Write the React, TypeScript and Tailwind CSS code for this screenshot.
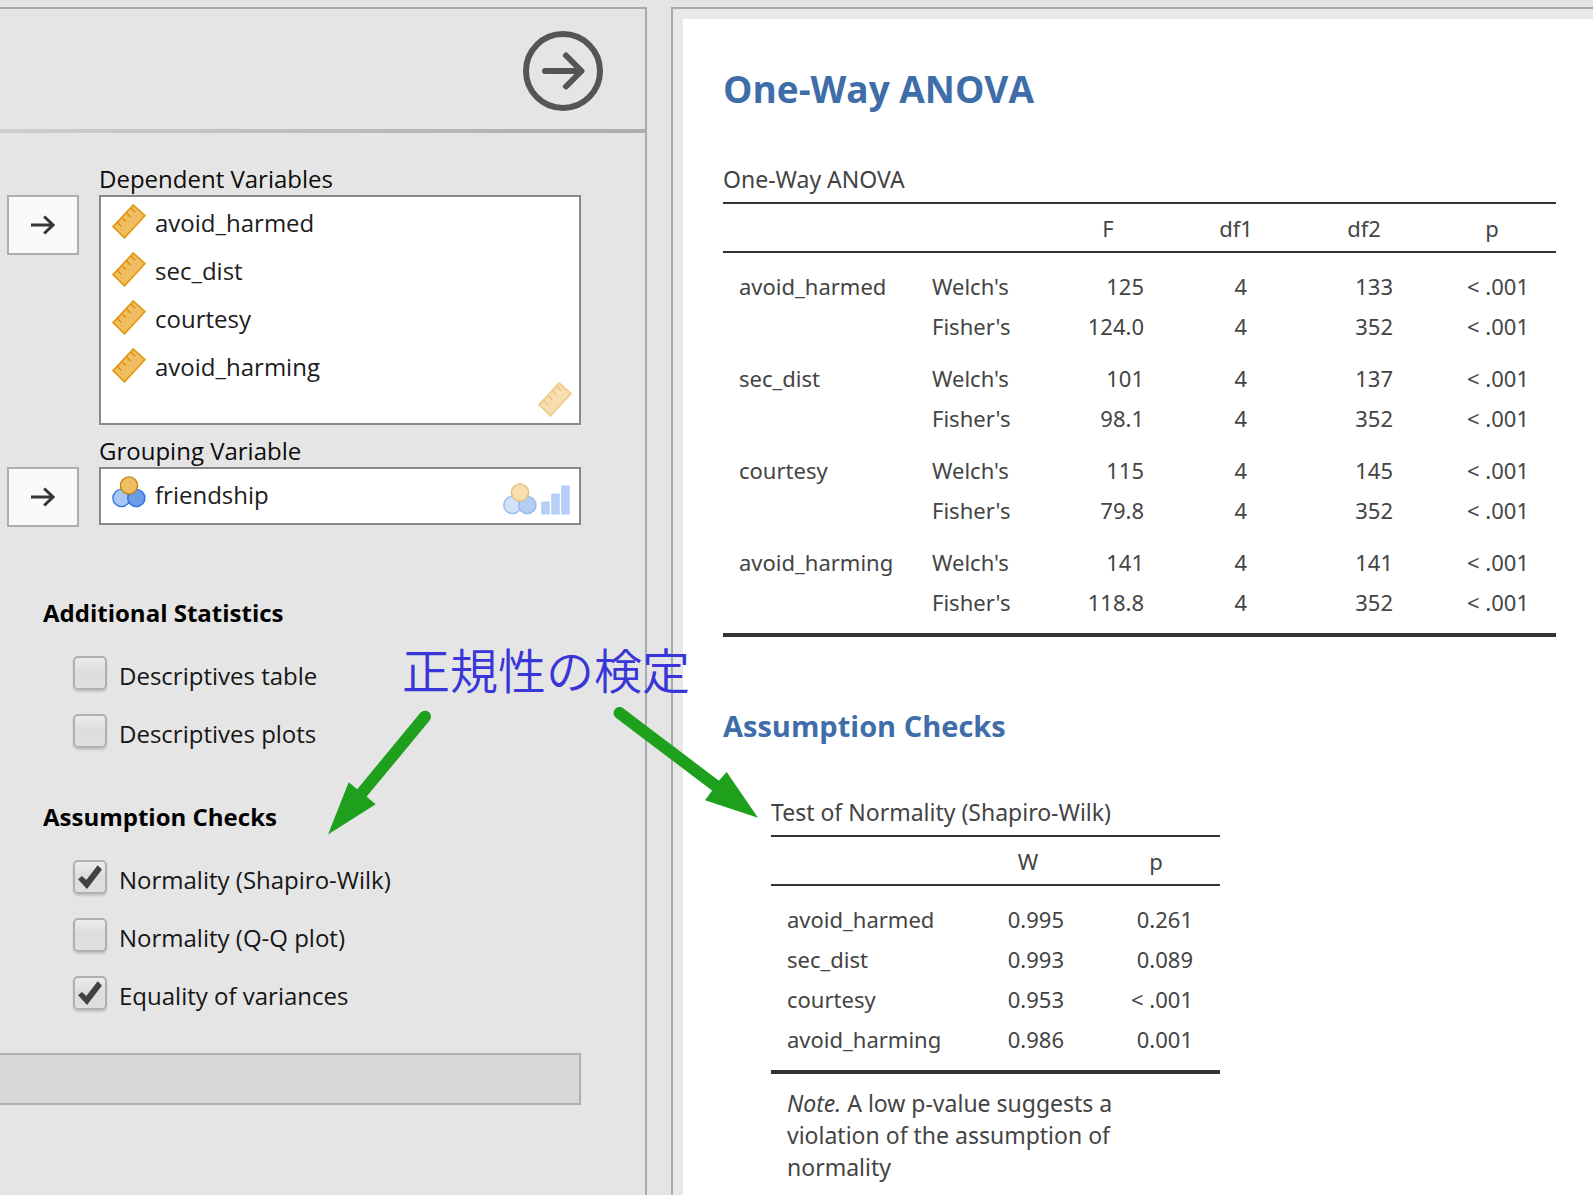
import { useState } from "react";
import type { ReactNode } from "react";

function RulerIcon() {
  return (
    <svg width="34" height="35" viewBox="0 0 34 35" fill="none" className="shrink-0" aria-hidden="true">
      <path d="M21.3 1 33 11.6 12.5 33.8 1 22.7Z" fill="#f0bd62" stroke="#e3970f" strokeWidth="1.6" />
      <path d="M5.3 18.3l4.3 4.3M10 13.6l4.2 4.2M14.4 8.8l4.2 4.2M18.8 4l4.2 4.2" stroke="#d88c0a" strokeWidth="1.3" />
    </svg>
  );
}

function NominalIcon() {
  return (
    <svg width="34" height="32" viewBox="0 0 34 32" className="shrink-0" strokeWidth="1.4" aria-hidden="true">
      <circle cx="9.5" cy="22" r="8.6" fill="#a9c6f2" stroke="#3078e6" />
      <circle cx="24.3" cy="22" r="8.6" fill="#6b9ce6" stroke="#2b74e4" />
      <circle cx="17" cy="9.5" r="8.6" fill="#f0bd62" stroke="#c4820c" />
    </svg>
  );
}

function OrdinalIcon() {
  return (
    <svg width="29" height="30" viewBox="0 0 29 30" className="shrink-0" fill="#76a3ee" stroke="#6294e8" aria-hidden="true">
      <path d="M.8 17h7.4v12H.8zM10.8 9h7.4v20h-7.4zM20.8 1h7.4v28h-7.4z" />
    </svg>
  );
}

function AssignButton({ label }: { label: string }) {
  return (
    <button
      type="button"
      aria-label={label}
      className="mt-8 flex h-[60px] w-[72px] shrink-0 items-center justify-center border-2 border-[#aeaeae] bg-[#fafafa]"
    >
      <svg width="24" height="20" viewBox="0 0 24 20" fill="none" stroke="#363636" strokeWidth="3" aria-hidden="true">
        <path d="M0 10h22M13.2 1.5 22 10l-8.8 8.5" />
      </svg>
    </button>
  );
}

function VariableField({ title, variables, icon, allowed, tall }: {
  title: string;
  variables: string[];
  icon: ReactNode;
  allowed: ReactNode;
  tall?: boolean;
}) {
  return (
    <div className="flex gap-5 pr-16 pl-[7px]">
      <AssignButton label={`Assign to ${title}`} />
      <div className="min-w-0 flex-1">
        <h3 className="text-2xl leading-8 text-[#0c0c0c]">{title}</h3>
        <div className={`relative border-2 border-[#888] bg-white ${tall ? "pb-[34px]" : "pb-1.5"}`}>
          <ul>
            {variables.map((name) => (
              <li key={name} className="flex h-12 items-start gap-[9px] pt-[7px] pl-[11px] text-2xl leading-[38px] text-[#1c1c1c]">
                {icon}
                {name}
              </li>
            ))}
          </ul>
          <div className={`absolute flex items-end gap-1 opacity-50 ${tall ? "right-[7px] bottom-1.5" : "right-[9px] bottom-2"}`}>
            {allowed}
          </div>
        </div>
      </div>
    </div>
  );
}

function Option({ label, initial = false }: { label: string; initial?: boolean }) {
  const [checked, setChecked] = useState(initial);
  return (
    <label className="flex h-10 items-start gap-3 text-2xl leading-10 text-[#161616]">
      <span className="grid">
        <input
          type="checkbox"
          checked={checked}
          onChange={(e) => setChecked(e.target.checked)}
          className="col-start-1 row-start-1 h-[34px] w-[34px] appearance-none rounded-[5px] border-2 border-[#b0b0b0] bg-linear-to-b from-[#ededed] via-[#dddddd] via-45% to-[#dfdfdf] shadow-[0_2px_2px_rgba(0,0,0,0.14)]"
        />
        {checked && (
          <svg viewBox="0 0 34 34" className="pointer-events-none col-start-1 row-start-1 h-[34px] w-[34px]" aria-hidden="true">
            <path d="M5 19.3 9 16l4.3 4L24.7 5.2 29 9.6 14 29Z" fill="#424242" />
          </svg>
        )}
      </span>
      {label}
    </label>
  );
}

function OptionGroup({ title, children }: { title: string; children: ReactNode }) {
  return (
    <section className="pl-[43px]">
      <h3 className="text-2xl leading-8 font-bold text-black">{title}</h3>
      <div className="mt-[27px] flex flex-col gap-[18px] pl-[30px]">{children}</div>
    </section>
  );
}

const anova = [
  { name: "avoid_harmed", welch: ["125", "4", "133", "< .001"], fisher: ["124.0", "4", "352", "< .001"] },
  { name: "sec_dist", welch: ["101", "4", "137", "< .001"], fisher: ["98.1", "4", "352", "< .001"] },
  { name: "courtesy", welch: ["115", "4", "145", "< .001"], fisher: ["79.8", "4", "352", "< .001"] },
  { name: "avoid_harming", welch: ["141", "4", "141", "< .001"], fisher: ["118.8", "4", "352", "< .001"] },
];

const normality = [
  ["avoid_harmed", "0.995", "0.261"],
  ["sec_dist", "0.993", "0.089"],
  ["courtesy", "0.953", "< .001"],
  ["avoid_harming", "0.986", "0.001"],
];

const anovaPads = ["pr-7", "pr-[53px]", "pr-[35px]", "pr-[27px]"];
const headCell = "h-[51px] border-y-2 border-[#333] p-0 text-center font-normal";
const firstRow = "pt-[17px] pb-1";
const lastRow = "pt-1 pb-[15px] border-b-4 border-[#333]";

function AnovaTable() {
  return (
    <table className="mt-[50px] table-fixed border-separate border-spacing-0 text-[22px] leading-8 text-[#444]">
      <caption className="pb-[7px] text-left text-[23px] leading-8">One-Way ANOVA</caption>
      <colgroup>
        <col className="w-[193px]" />
        <col className="w-32" />
        <col className="w-32" />
        <col className="w-32" />
        <col className="w-32" />
        <col className="w-32" />
      </colgroup>
      <thead>
        <tr>
          {["", "", "F", "df1", "df2", "p"].map((h, i) => (
            <th key={i} scope="col" className={headCell}>{h}</th>
          ))}
        </tr>
      </thead>
      {anova.map((g, gi) => {
        const top = gi === 0 ? firstRow : "pt-4 pb-1";
        const bottom = gi === anova.length - 1 ? lastRow : "py-1";
        return (
          <tbody key={g.name}>
            <tr>
              <td className={`${top} pl-4`}>{g.name}</td>
              <td className={`${top} pl-4`}>Welch's</td>
              {g.welch.map((v, i) => (
                <td key={i} className={`${top} ${anovaPads[i]} text-right whitespace-nowrap`}>{v}</td>
              ))}
            </tr>
            <tr>
              <td className={bottom} />
              <td className={`${bottom} pl-4`}>Fisher's</td>
              {g.fisher.map((v, i) => (
                <td key={i} className={`${bottom} ${anovaPads[i]} text-right whitespace-nowrap`}>{v}</td>
              ))}
            </tr>
          </tbody>
        );
      })}
    </table>
  );
}

function NormalityTable() {
  return (
    <table className="mt-[50px] ml-12 table-fixed border-separate border-spacing-0 text-[22px] leading-8 text-[#444]">
      <caption className="pb-[7px] text-left text-[23px] leading-8">Test of Normality (Shapiro-Wilk)</caption>
      <colgroup>
        <col className="w-[193px]" />
        <col className="w-32" />
        <col className="w-32" />
      </colgroup>
      <thead>
        <tr>
          {["", "W", "p"].map((h, i) => (
            <th key={i} scope="col" className={headCell}>{h}</th>
          ))}
        </tr>
      </thead>
      <tbody>
        {normality.map(([name, w, p], i) => {
          const pad = i === 0 ? firstRow : i === normality.length - 1 ? lastRow : "py-1";
          return (
            <tr key={name}>
              <td className={`${pad} pl-4`}>{name}</td>
              <td className={`${pad} pr-7 text-right`}>{w}</td>
              <td className={`${pad} pr-[27px] text-right whitespace-nowrap`}>{p}</td>
            </tr>
          );
        })}
      </tbody>
      <tfoot>
        <tr>
          <td colSpan={3} className="pt-[13px] pr-20 pl-4 text-[23px] leading-8">
            <em>Note.</em> A low p-value suggests a violation of the assumption of normality
          </td>
        </tr>
      </tfoot>
    </table>
  );
}

function Annotation() {
  return (
    <div className="pointer-events-none absolute top-[636px] left-[328px] flex w-[432px] flex-col gap-1">
      <p className="pl-[74px] font-['Noto_Sans_CJK_JP',sans-serif] text-5xl leading-[64px] font-[350] whitespace-nowrap text-[#3836d8]">
        正規性の検定
      </p>
      <svg width="432" height="132" viewBox="0 704 432 132" fill="#1ea01c" stroke="#1ea01c" aria-hidden="true">
        <path d="M97 716.7 33 794M291.5 713 388 786" strokeWidth="12" strokeLinecap="round" />
        <path d="M0 834.5 20.7 782.3 29.5 789.5 39 797 47.7 804.3ZM430 817.7 377 800.3 384.5 790 390.5 781 398.7 772Z" stroke="none" />
      </svg>
    </div>
  );
}

export default function App() {
  return (
    <div className="relative flex min-h-screen overflow-hidden bg-[#e5e5e5] pt-[7px] font-['Open_Sans','Noto_Sans',sans-serif]">
      <section aria-label="Analysis options" className="w-[647px] shrink-0 border-t-2 border-r-2 border-[#aaa]">
        <header className="flex h-[120px] items-center justify-end pr-[42px]">
          <button type="button" aria-label="Hide options" className="pt-1">
            <svg width="80" height="80" viewBox="0 0 80 80" fill="none" stroke="#555" strokeWidth="6" strokeLinecap="round" strokeLinejoin="round" aria-hidden="true">
              <circle cx="40" cy="40" r="37" />
              <path d="M22 40h36M43 24.500 58.500 40 43 55.500" />
            </svg>
          </button>
        </header>
        <div className="h-1 bg-linear-to-r from-[#cecece] to-[#acacac]" />
        <div className="flex flex-col gap-2.5 pt-[30px]">
          <VariableField
            title="Dependent Variables"
            variables={["avoid_harmed", "sec_dist", "courtesy", "avoid_harming"]}
            icon={<RulerIcon />}
            allowed={<RulerIcon />}
            tall
          />
          <VariableField
            title="Grouping Variable"
            variables={["friendship"]}
            icon={<NominalIcon />}
            allowed={<><NominalIcon /><OrdinalIcon /></>}
          />
        </div>
        <div className="mt-[70px] flex flex-col gap-[47px]">
          <OptionGroup title="Additional Statistics">
            <Option label="Descriptives table" />
            <Option label="Descriptives plots" />
          </OptionGroup>
          <OptionGroup title="Assumption Checks">
            <Option label="Normality (Shapiro-Wilk)" initial />
            <Option label="Normality (Q-Q plot)" />
            <Option label="Equality of variances" initial />
          </OptionGroup>
        </div>
        <div className="mt-[37px] mr-16 h-[52px] border-2 border-l-0 border-[#b0b0b0] bg-[#d8d8d8]" />
      </section>

      <main className="ml-6 flex min-w-0 flex-1 flex-col border-t-2 border-l-2 border-[#aaa] bg-[#e8e8e8] pt-2.5 pl-2.5 font-['Noto_Sans',sans-serif]">
        <div className="flex-1 bg-white pt-[46px] pl-10">
          <h1 className="font-['Open_Sans',sans-serif] text-[37px] leading-[48px] font-bold text-[#3e6da9]">One-Way ANOVA</h1>
          <AnovaTable />
          <h2 className="mt-[69px] font-['Open_Sans',sans-serif] text-[29px] leading-10 font-bold text-[#3e6da9]">Assumption Checks</h2>
          <NormalityTable />
        </div>
      </main>

      <Annotation />
    </div>
  );
}
